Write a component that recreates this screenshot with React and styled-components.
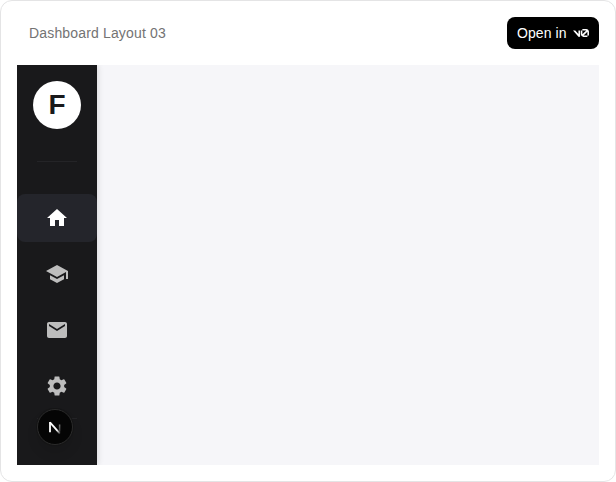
import React from "react";
import styled, { createGlobalStyle } from "styled-components";
import { MdHome, MdSchool, MdMail, MdSettings } from "react-icons/md";

const GlobalStyle = createGlobalStyle`
  *, *::before, *::after { box-sizing: border-box; }
  body {
    margin: 0;
    background: #fff;
    font-family: "Liberation Sans", Arial, sans-serif;
  }
`;

const Card = styled.main`
  width: 616px;
  height: 482px;
  padding: 16px;
  display: flex;
  flex-direction: column;
  gap: 16px;
  background: #fff;
  border: 1px solid #e4e4e5;
  border-radius: 12px;
`;

const Header = styled.header`
  height: 32px;
  padding-left: 12px;
  display: flex;
  align-items: center;
  justify-content: space-between;
`;

const Title = styled.h1`
  margin: 0;
  font-size: 14px;
  font-weight: 400;
  line-height: 20px;
  letter-spacing: 0.16px;
  color: #737373;
`;

const OpenButton = styled.button`
  width: 92px;
  height: 32px;
  padding: 0 10px;
  display: flex;
  align-items: center;
  justify-content: space-between;
  border: 0;
  border-radius: 8px;
  background: #000;
  color: #fff;
  font: 14px/20px "Liberation Sans", Arial, sans-serif;
  letter-spacing: 0.08px;
`;

const V0Mark = styled.svg`
  width: 16px;
  height: 16px;
  fill: currentColor;
`;

const Preview = styled.section`
  height: 400px;
  display: flex;
  background: #f6f6f9;
`;

const Sidebar = styled.aside`
  position: relative;
  width: 80px;
  padding-top: 16px;
  display: flex;
  flex-direction: column;
  align-items: center;
  background: #19191b;
  box-shadow: 1px 0 6px rgba(0, 0, 0, 0.12);
  clip-path: inset(0 -12px 0 0);
`;

const Avatar = styled.div`
  width: 48px;
  height: 48px;
  display: grid;
  place-items: center;
  border-radius: 50%;
  background: #fff;
  color: #19191b;
  font-size: 28px;
  font-weight: 700;
  line-height: 48px;
`;

const Divider = styled.hr`
  width: 40px;
  height: 1px;
  margin: ${({ $space }) => $space}px 0;
  border: 0;
  background: #242427;
`;

const Nav = styled.nav`
  width: 100%;
  display: flex;
  flex-direction: column;
  gap: 8px;
`;

const NavItem = styled.a`
  height: 48px;
  display: grid;
  place-items: center;
  border-radius: 8px;
  background: ${({ $active }) => ($active ? "#24252b" : "transparent")};
  color: ${({ $active }) => ($active ? "#fff" : "#bdbdbd")};
  font-size: 24px;
`;

const DevBadge = styled.div`
  position: absolute;
  left: 20px;
  bottom: 20px;
  width: 36px;
  height: 36px;
  display: grid;
  place-items: center;
  border-radius: 50%;
  background: #050505;
  border: 1px solid #2b2b2b;
  box-shadow: 0 0 0 1px #151516, 0 8px 12px rgba(0, 0, 0, 0.1);
`;

const items = [
  { name: "Home", Icon: MdHome, active: true },
  { name: "School", Icon: MdSchool },
  { name: "Mail", Icon: MdMail },
  { name: "Settings", Icon: MdSettings },
];

function NextMark() {
  return (
    <svg width="16" height="16" viewBox="0 0 16 16" fill="none">
      <defs>
        <linearGradient id="diagonal" x1="7" y1="7" x2="13" y2="15" gradientUnits="userSpaceOnUse">
          <stop offset="0.5" stopColor="#fff" />
          <stop offset="1" stopColor="#fff" stopOpacity="0.15" />
        </linearGradient>
        <linearGradient id="stem" x1="0" y1="3" x2="0" y2="12" gradientUnits="userSpaceOnUse">
          <stop stopColor="#fff" stopOpacity="0.55" />
          <stop offset="1" stopColor="#fff" stopOpacity="0.25" />
        </linearGradient>
      </defs>
      <path d="M3 3.4L12.9 14.6" stroke="url(#diagonal)" strokeWidth="1.8" />
      <path d="M3 13.2V2.9" stroke="#fff" strokeWidth="1.8" />
      <path d="M12.6 5.5V12.6" stroke="url(#stem)" strokeWidth="1.5" />
    </svg>
  );
}

export default function App() {
  return (
    <>
      <GlobalStyle />
      <Card>
        <Header>
          <Title>Dashboard Layout 03</Title>
          <OpenButton>
            Open in
            <V0Mark viewBox="0 0 40 20">
              <path d="M23.3919 0H32.9188C36.7819 0 39.9136 3.13165 39.9136 6.99475V16.0805H36.0006V6.99475C36.0006 6.90167 35.9969 6.80925 35.9898 6.71766L26.4628 16.079C26.4949 16.08 26.5272 16.0805 26.5595 16.0805H36.0006V19.7762H26.5595C22.6964 19.7762 19.4788 16.6139 19.4788 12.7508V3.68923H23.3919V12.7508C23.3919 12.9253 23.4054 13.0977 23.4316 13.2668L33.1682 3.6995C33.0861 3.6927 33.003 3.68923 32.9188 3.68923H23.3919V0Z" />
              <path d="M13.7688 19.0956L0 3.68759H5.53933L13.6231 12.7337V3.68759H17.7535V17.5746C17.7535 19.6705 15.1654 20.6584 13.7688 19.0956Z" />
            </V0Mark>
          </OpenButton>
        </Header>
        <Preview>
          <Sidebar>
            <Avatar>F</Avatar>
            <Divider $space={32} />
            <Nav>
              {items.map(({ name, Icon, active }) => (
                <NavItem key={name} aria-label={name} $active={active}>
                  <Icon />
                </NavItem>
              ))}
            </Nav>
            <Divider $space={8} />
            <DevBadge>
              <NextMark />
            </DevBadge>
          </Sidebar>
        </Preview>
      </Card>
    </>
  );
}
